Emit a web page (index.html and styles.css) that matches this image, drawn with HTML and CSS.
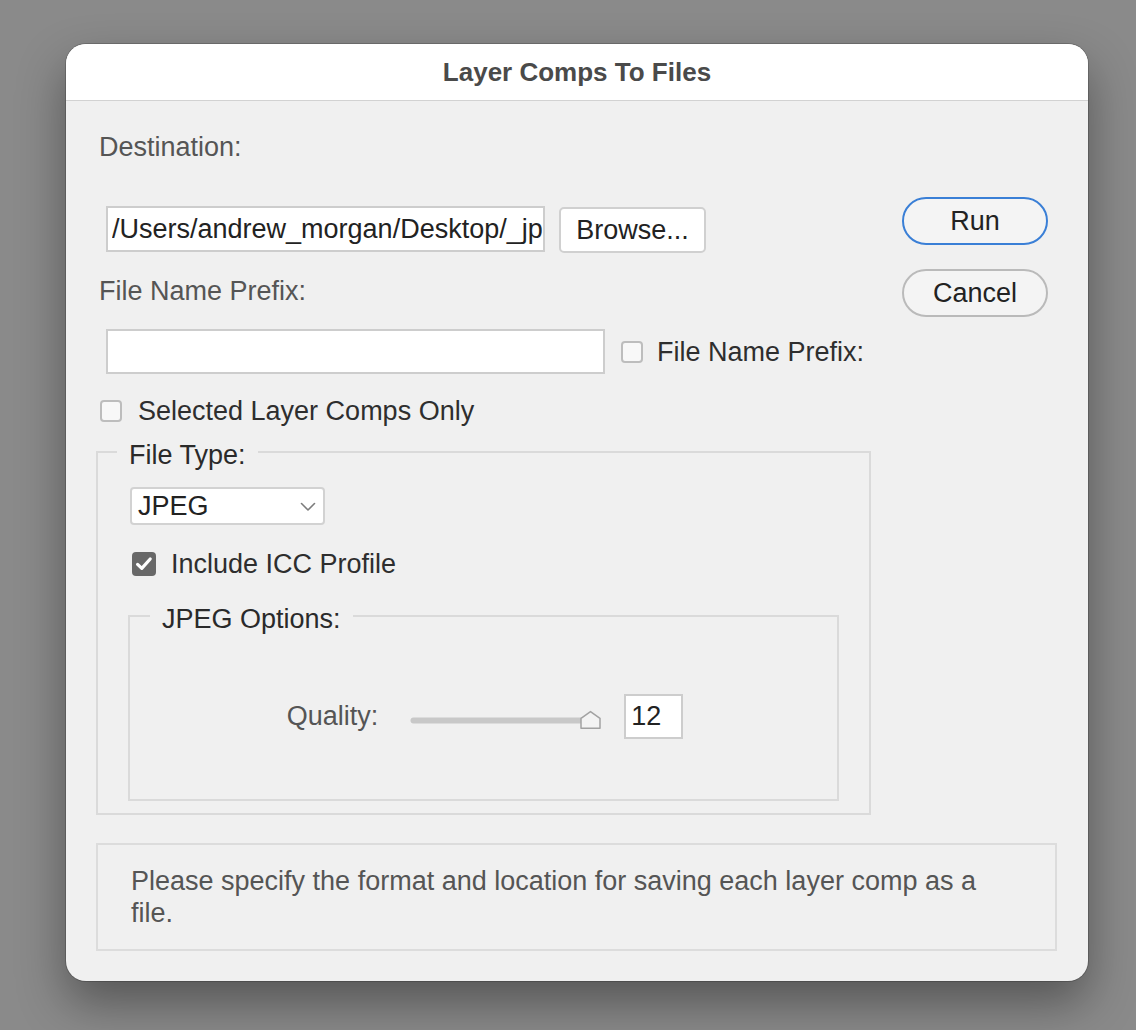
FILE: index.html
```html
<!DOCTYPE html>
<html lang="en">
<head>
<meta charset="utf-8">
<title>Layer Comps To Files</title>
<link rel="stylesheet" href="styles.css">
</head>
<body>
<div class="window">
  <div class="titlebar">Layer Comps To Files</div>
  <div class="content">
    <div class="top">
      <div class="main">
        <div class="label">Destination:</div>
        <div class="path-row">
          <input class="textfield path" type="text" value="/Users/andrew_morgan/Desktop/_jpeg_exports" readonly>
          <div class="button browse">Browse...</div>
        </div>
        <div class="label prefix-label">File Name Prefix:</div>
        <div class="prefix-row">
          <input class="textfield prefix" type="text" value="" readonly>
          <span class="checkbox"></span>
          <span class="check-label">File Name Prefix:</span>
        </div>
        <div class="selected-row">
          <span class="checkbox"></span>
          <span class="check-label">Selected Layer Comps Only</span>
        </div>
        <fieldset class="group filetype">
          <legend>File Type:</legend>
          <div class="select">
            <span>JPEG</span>
            <svg class="chevron" width="16" height="10" viewBox="0 0 16 10"><polyline points="1.5,1.5 8,8 14.5,1.5" fill="none" stroke="#7c7c7c" stroke-width="1.6" stroke-linecap="round" stroke-linejoin="round"/></svg>
          </div>
          <div class="icc-row">
            <span class="checkbox checked"><svg width="18" height="16" viewBox="0 0 18 16"><polyline points="2.6,8.4 6.8,12.4 15.2,3" fill="none" stroke="#fff" stroke-width="3.2" stroke-linecap="round" stroke-linejoin="round"/></svg></span>
            <span class="check-label">Include ICC Profile</span>
          </div>
          <fieldset class="group jpeg">
            <legend>JPEG Options:</legend>
            <div class="quality-row">
              <span class="quality-label">Quality:</span>
              <svg class="slider" width="191" height="24" viewBox="0 0 191 24">
                <rect x="0.5" y="11.5" width="186" height="6" rx="3" fill="#c8c8c8"/>
                <path d="M171 22.2 L171 12.3 L180.5 5.6 L190 12.3 L190 22.2 Z" fill="#f3f3f3" stroke="#a2a2a2" stroke-width="1.5" stroke-linejoin="round"/>
              </svg>
              <input class="textfield quality" type="text" value="12" readonly>
            </div>
          </fieldset>
        </fieldset>
      </div>
      <div class="side">
        <div class="pill run">Run</div>
        <div class="pill cancel">Cancel</div>
      </div>
    </div>
    <div class="message">
      <p>Please specify the format and location for saving each layer comp as a file.</p>
    </div>
  </div>
</div>
</body>
</html>
```

FILE: styles.css
```css
html, body {
  margin: 0;
  padding: 0;
}
body {
  background: #8a8a8a;
  font-family: "Liberation Sans", Arial, sans-serif;
  font-size: 27px;
  width: 1136px;
  height: 1030px;
  overflow: hidden;
  padding-top: 44px;
  box-sizing: border-box;
}
.window {
  margin-left: 66px;
  width: 1022px;
  height: 937px;
  border-radius: 20px;
  overflow: hidden;
  background: #f0f0f0;
  box-shadow: 0 22px 48px rgba(0,0,0,0.38), 0 0 0 1px rgba(0,0,0,0.18);
}
.titlebar {
  height: 56px;
  line-height: 56px;
  background: #ffffff;
  border-bottom: 1px solid #d2d2d2;
  text-align: center;
  font-weight: bold;
  font-size: 26px;
  color: #4a4a4a;
}
.content {
  padding: 29px 31px 30px 30px;
}
.top {
  display: flex;
}
.main {
  flex: 1;
}
.side {
  width: 146px;
  margin-right: 9px;
  padding-top: 67px;
  display: flex;
  flex-direction: column;
  gap: 24px;
}
.label {
  line-height: 34px;
  height: 34px;
  color: #555;
  padding-left: 3px;
}
.path-row {
  margin-top: 42px;
  padding-left: 10px;
  display: flex;
  gap: 14px;
  height: 46px;
}
.textfield {
  box-sizing: border-box;
  margin: 0;
  background: #fff;
  border: 2px solid #cdcdcd;
  border-radius: 0;
  color: #222;
  font-family: inherit;
  font-size: 27px;
  outline: none;
  flex: none;
}
.path {
  width: 439px;
  height: 46px;
  padding: 0 0 0 4px;
}
.button {
  box-sizing: border-box;
  height: 46px;
  line-height: 42px;
  width: 147px;
  text-align: center;
  background: #fff;
  border: 2px solid #d0d0d0;
  border-radius: 5px;
  color: #222;
}
.browse {
  margin-top: 1px;
}
.prefix-label {
  margin-top: 22px;
}
.prefix-row {
  margin-top: 21px;
  padding-left: 10px;
  display: flex;
  align-items: center;
  height: 45px;
}
.prefix {
  width: 499px;
  height: 45px;
  padding: 0;
}
.prefix-row .checkbox {
  margin-left: 16px;
}
.checkbox {
  box-sizing: border-box;
  width: 22px;
  height: 22px;
  border: 2px solid #bdbdbd;
  border-radius: 4px;
  background: #f8f8f8;
  flex: none;
  display: flex;
  align-items: center;
  justify-content: center;
}
.checkbox.checked {
  width: 24px;
  height: 24px;
  border: none;
  background: #686868;
}
.check-label {
  color: #2e2e2e;
  margin-left: 14px;
  line-height: 34px;
}
.selected-row {
  margin-top: 20px;
  height: 34px;
  display: flex;
  align-items: center;
  padding-left: 4px;
}
.selected-row .check-label {
  margin-left: 16px;
}
fieldset.group {
  margin: 0;
  padding: 0;
  border: 2px solid #dadada;
  min-width: 0;
}
fieldset.group legend {
  padding: 7px 12px 0 12px;
  line-height: 34px;
  color: #2a2a2a;
}
.filetype {
  width: 775px;
  box-sizing: border-box;
  margin-top: 3px !important;
  padding-bottom: 12px !important;
}
.filetype > legend {
  margin-left: 19px;
}
.select {
  box-sizing: border-box;
  margin-top: 15px;
  margin-left: 32px;
  width: 195px;
  height: 38px;
  background: #fff;
  border: 2px solid #d2d2d2;
  border-radius: 4px;
  display: flex;
  align-items: center;
  justify-content: space-between;
  padding: 0 7px 0 6px;
  color: #222;
}
.chevron {
  margin-top: 2px;
}
.icc-row {
  margin-top: 22px;
  height: 34px;
  display: flex;
  align-items: center;
  padding-left: 34px;
}
.icc-row .check-label {
  margin-left: 15px;
}
.jpeg {
  margin: 14px 30px 0 30px !important;
  padding-bottom: 60px !important;
}
.jpeg > legend {
  margin-left: 20px;
  padding-left: 11px;
  padding-right: 11px;
}
.quality-row {
  margin-top: 58px;
  display: flex;
  align-items: center;
  justify-content: center;
  height: 45px;
  padding-left: 3px;
}
.quality-label {
  color: #555;
}
.slider {
  margin-left: 32px;
  margin-top: 3px;
}
.quality {
  width: 59px;
  height: 45px;
  padding: 0 0 0 5px;
  margin-left: 23px;
}
.pill {
  box-sizing: border-box;
  height: 48px;
  line-height: 44px;
  border-radius: 24px;
  text-align: center;
  color: #222;
  background: #f4f4f4;
}
.run {
  border: 2px solid #3a7fd6;
}
.cancel {
  border: 2px solid #bababa;
}
.message {
  margin-top: 28px;
  border: 2px solid #dcdcdc;
  padding: 20px 60px 20px 33px;
}
.message p {
  margin: 0;
  line-height: 32px;
  color: #555;
}
```
